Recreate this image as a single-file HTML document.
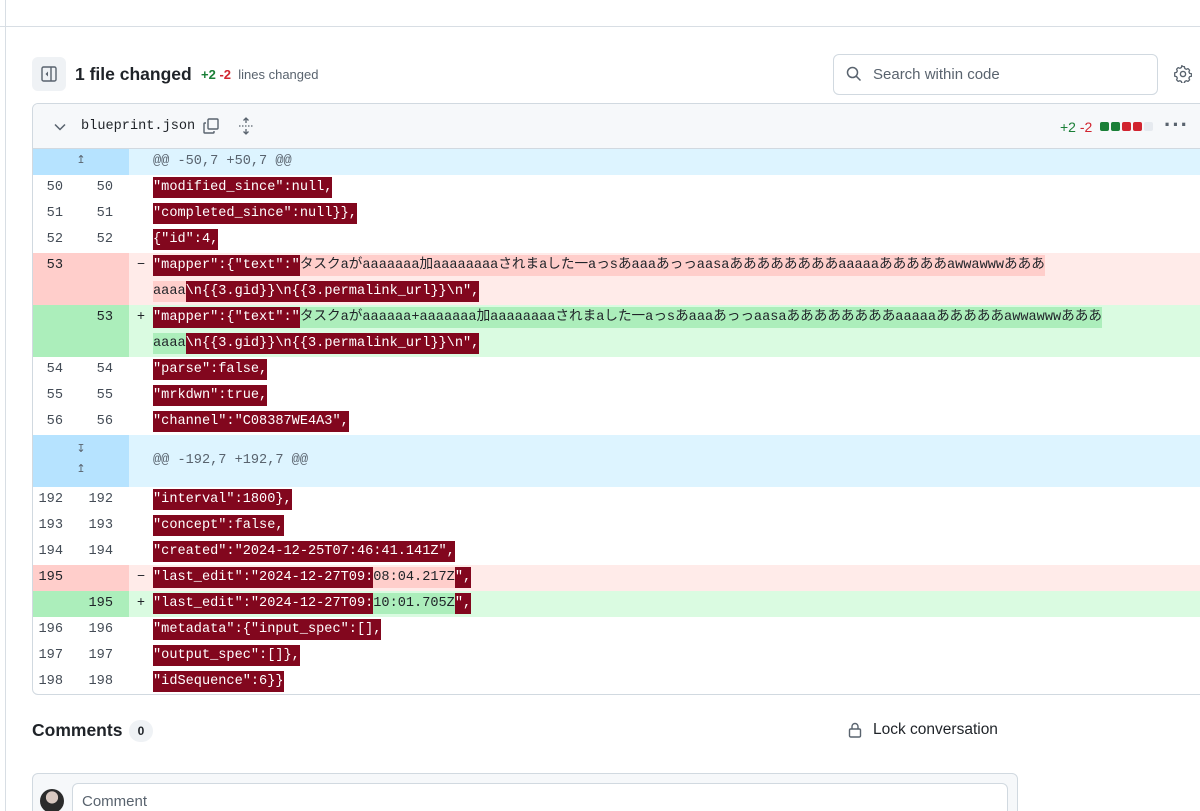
<!DOCTYPE html>
<html><head><meta charset="utf-8"><style>
*{box-sizing:border-box;margin:0;padding:0}
html{overflow:hidden;height:811px}
body{width:1200px;height:811px;overflow:hidden;background:#fff;font-family:"Liberation Sans","Noto Sans CJK JP",sans-serif;color:#1f2328;position:relative}
.topline{position:absolute;left:0;top:26px;width:1200px;height:1px;background:#d8dee4}
.vline{position:absolute;left:5px;top:0;width:1px;height:811px;background:#d8dee4}
.tog{position:absolute;left:32px;top:57px;width:34px;height:34px;border-radius:6px;background:#eff2f5}
.title{position:absolute;left:75px;top:64px;font-size:17.5px;font-weight:bold}
.stats{position:absolute;left:201px;top:67px;font-size:13px;color:#59636e}
.g{color:#1a7f37}.r{color:#d1242f}
.search{position:absolute;left:833px;top:54px;width:325px;height:41px;border:1px solid #d1d9e0;border-radius:6px;font-size:15px;color:#59636e;padding:11px 0 0 39px}
.box{position:absolute;left:32px;top:103px;width:1180px;height:592px;border:1px solid #d1d9e0;border-radius:6px;overflow:hidden}
.hdr{height:45px;background:#f6f8fa;border-bottom:1px solid #d1d9e0;position:relative}
.fname{position:absolute;left:48px;top:15px;font-family:"Liberation Mono",monospace;font-size:13.6px}
.row{display:flex;height:26px;font-family:"Liberation Mono","Noto Sans CJK JP",monospace;font-size:13.6px;line-height:26px;white-space:pre}
.n{width:48px;text-align:right;padding-right:18px;color:#444c56;flex:none}
.n2{width:48px;text-align:right;padding-right:16px;color:#444c56;flex:none}
.s{width:24px;text-align:center;flex:none;color:#1f2328}
.c{flex:1}
.h{background:#ddf4ff}.h .gut{width:96px;background:#b6e3ff;flex:none}
.h .c{color:#59636e;padding-left:24px}
.d{background:#ffebe9}.d .n,.d .n2{background:#ffcecb;color:#1f2328}
.a{background:#dafbe1}.a .n,.a .n2{background:#aceebb;color:#1f2328}
.sel{background:#82071e;color:#fff;padding:3px 0}
.dh{background:#ffcecb;padding:3px 0}.ah{background:#aceebb;padding:3px 0}
.cm{position:absolute;left:32px;top:720px;font-size:17.5px;font-weight:bold}
.cnt{position:absolute;left:129px;top:720px;width:24px;height:22px;border-radius:11px;background:#eff2f5;font-size:12px;text-align:center;line-height:22px;font-weight:bold}
.lock{position:absolute;left:873px;top:721px;font-size:15.5px}
.cbox{position:absolute;left:32px;top:773px;width:986px;height:60px;background:#f6f8fa;border:1px solid #d1d9e0;border-radius:6px}
.cin{position:absolute;left:72px;top:783px;width:936px;height:40px;background:#fff;border:1px solid #d1d9e0;border-radius:6px;font-size:15px;color:#59636e;padding:9px 9px}
.av{position:absolute;left:40px;top:789px;width:24px;height:24px;border-radius:12px;background:radial-gradient(circle at 50% 35%,#d8c8c0 30%,#2b2b2b 32%)}
</style></head><body>
<div class="topline"></div><div class="vline"></div>
<div class="tog"><svg width="34" height="34" viewBox="0 0 34 34"><rect x="10" y="10" width="14" height="14" rx="1.5" fill="none" stroke="#59636e" stroke-width="1.4"/><line x1="19" y1="10" x2="19" y2="24" stroke="#59636e" stroke-width="1.4"/><path d="M16 14.5l-2.5 2.5 2.5 2.5z" fill="#59636e"/></svg></div>
<div class="title">1 file changed</div>
<div class="stats"><b class="g">+2</b> <b class="r">-2</b>&nbsp; lines changed</div>
<div class="search">Search within code</div>
<svg style="position:absolute;left:846px;top:66px" width="16" height="16" viewBox="0 0 16 16"><circle cx="6.5" cy="6.5" r="5" fill="none" stroke="#59636e" stroke-width="1.5"/><line x1="10.2" y1="10.2" x2="14.5" y2="14.5" stroke="#59636e" stroke-width="1.5"/></svg>
<svg style="position:absolute;left:1174px;top:65px" width="18" height="18" viewBox="0 0 18 18"><circle cx="9" cy="9" r="2.6" fill="none" stroke="#59636e" stroke-width="1.4"/><path d="M9 1.5l1.4.2.4 1.8 1.5.8 1.7-.7 1.6 1.6-.7 1.7.8 1.5 1.8.4v2.4l-1.8.4-.8 1.5.7 1.7-1.6 1.6-1.7-.7-1.5.8-.4 1.8H7.8l-.4-1.8-1.5-.8-1.7.7-1.6-1.6.7-1.7-.8-1.5-1.8-.4V7.8l1.8-.4.8-1.5-.7-1.7 1.6-1.6 1.7.7 1.5-.8.4-1.8z" fill="none" stroke="#59636e" stroke-width="1.3" stroke-linejoin="round"/></svg>
<div class="box">
<div class="hdr">
<svg style="position:absolute;left:20px;top:16px" width="14" height="14" viewBox="0 0 14 14"><path d="M2 4.5l5 5 5-5" fill="none" stroke="#59636e" stroke-width="1.5"/></svg>
<div class="fname">blueprint.json</div>
<svg style="position:absolute;left:169px;top:13px" width="18" height="18" viewBox="0 0 18 18"><path d="M4 6H2.8a.8.8 0 00-.8.8v8.4a.8.8 0 00.8.8h8.4a.8.8 0 00.8-.8V14" fill="none" stroke="#59636e" stroke-width="1.4"/><rect x="6" y="2" width="10" height="10" rx="1" fill="none" stroke="#59636e" stroke-width="1.4"/></svg>
<svg style="position:absolute;left:204px;top:13px" width="18" height="18" viewBox="0 0 18 18"><path d="M9 1v5M6.5 3.5L9 1l2.5 2.5M9 17v-5M6.5 14.5L9 17l2.5-2.5" fill="none" stroke="#59636e" stroke-width="1.3"/><path d="M2 9h14" stroke="#59636e" stroke-width="1.2" stroke-dasharray="1.5 1.5"/></svg>
<div style="position:absolute;left:1027px;top:15px;font-size:14px"><span class="g">+2</span> <span class="r">-2</span></div>
<div style="position:absolute;left:1067px;top:18px;display:flex;gap:2px"><i style="width:9px;height:9px;background:#1a7f37;border-radius:2px"></i><i style="width:9px;height:9px;background:#1a7f37;border-radius:2px"></i><i style="width:9px;height:9px;background:#d1242f;border-radius:2px"></i><i style="width:9px;height:9px;background:#d1242f;border-radius:2px"></i><i style="width:9px;height:9px;background:#e6eaef;border-radius:2px"></i></div>
<div style="position:absolute;left:1131px;top:8px;font-size:22px;color:#59636e;letter-spacing:1px;font-weight:bold">···</div>
</div>
<div class="row h"><div class="gut" style="text-align:center;color:#59636e;font-size:11px;line-height:24px">↥</div><div class="c">@@ -50,7 +50,7 @@</div></div>
<div class="row"><div class="n">50</div><div class="n2">50</div><div class="s"></div><div class="c"><span class="sel">"modified_since":null,</span></div></div>
<div class="row"><div class="n">51</div><div class="n2">51</div><div class="s"></div><div class="c"><span class="sel">"completed_since":null}},</span></div></div>
<div class="row"><div class="n">52</div><div class="n2">52</div><div class="s"></div><div class="c"><span class="sel">{"id":4,</span></div></div>
<div class="row d" style="height:52px"><div class="n">53</div><div class="n2"></div><div class="s">−</div><div class="c"><span class="sel">"mapper":{"text":"</span><span class="dh">タスクaがaaaaaaa加aaaaaaaaされまaした一aっsあaaaあっっaasaああああああああaaaaaあああああawwawwwあああ</span>
<span class="dh">aaaa</span><span class="sel">\n{{3.gid}}\n{{3.permalink_url}}\n",</span></div></div>
<div class="row a" style="height:52px"><div class="n"></div><div class="n2">53</div><div class="s">+</div><div class="c"><span class="sel">"mapper":{"text":"</span><span class="ah">タスクaがaaaaaa+aaaaaaa加aaaaaaaaされまaした一aっsあaaaあっっaasaああああああああaaaaaあああああawwawwwあああ</span>
<span class="ah">aaaa</span><span class="sel">\n{{3.gid}}\n{{3.permalink_url}}\n",</span></div></div>
<div class="row"><div class="n">54</div><div class="n2">54</div><div class="s"></div><div class="c"><span class="sel">"parse":false,</span></div></div>
<div class="row"><div class="n">55</div><div class="n2">55</div><div class="s"></div><div class="c"><span class="sel">"mrkdwn":true,</span></div></div>
<div class="row"><div class="n">56</div><div class="n2">56</div><div class="s"></div><div class="c"><span class="sel">"channel":"C08387WE4A3",</span></div></div>
<div class="row h" style="height:52px;line-height:52px"><div class="gut" style="text-align:center;color:#59636e;font-size:11px;line-height:20px;padding-top:5px">↧<br>↥</div><div class="c">@@ -192,7 +192,7 @@</div></div>
<div class="row"><div class="n">192</div><div class="n2">192</div><div class="s"></div><div class="c"><span class="sel">"interval":1800},</span></div></div>
<div class="row"><div class="n">193</div><div class="n2">193</div><div class="s"></div><div class="c"><span class="sel">"concept":false,</span></div></div>
<div class="row"><div class="n">194</div><div class="n2">194</div><div class="s"></div><div class="c"><span class="sel">"created":"2024-12-25T07:46:41.141Z",</span></div></div>
<div class="row d"><div class="n">195</div><div class="n2"></div><div class="s">−</div><div class="c"><span class="sel">"last_edit":"2024-12-27T09:</span><span class="dh">08:04.217Z</span><span class="sel">",</span></div></div>
<div class="row a"><div class="n"></div><div class="n2">195</div><div class="s">+</div><div class="c"><span class="sel">"last_edit":"2024-12-27T09:</span><span class="ah">10:01.705Z</span><span class="sel">",</span></div></div>
<div class="row"><div class="n">196</div><div class="n2">196</div><div class="s"></div><div class="c"><span class="sel">"metadata":{"input_spec":[],</span></div></div>
<div class="row"><div class="n">197</div><div class="n2">197</div><div class="s"></div><div class="c"><span class="sel">"output_spec":[]},</span></div></div>
<div class="row"><div class="n">198</div><div class="n2">198</div><div class="s"></div><div class="c"><span class="sel">"idSequence":6}}</span></div></div>
</div>
<div class="cm">Comments</div><div class="cnt">0</div>
<svg style="position:absolute;left:848px;top:722px" width="14" height="16" viewBox="0 0 14 16"><rect x="1.5" y="7" width="11" height="8" rx="1.2" fill="none" stroke="#59636e" stroke-width="1.4"/><path d="M4 7V4.5a3 3 0 016 0V7" fill="none" stroke="#59636e" stroke-width="1.4"/></svg>
<div class="lock">Lock conversation</div>
<div class="cbox"></div><div class="av"></div><div class="cin">Comment</div>
</body></html>
